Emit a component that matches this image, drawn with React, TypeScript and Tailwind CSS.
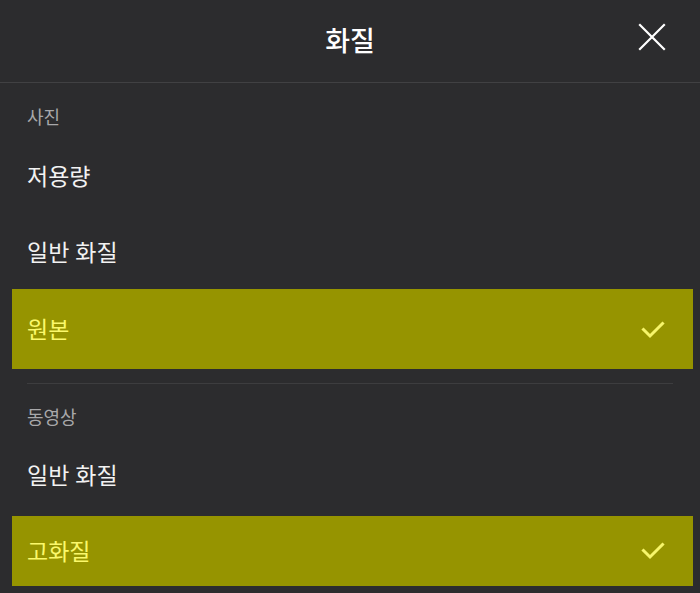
type Item = { label: string; selected?: boolean };

function Check() {
  return (
    <svg width="24" height="20" viewBox="0 0 24 20" fill="none">
      <path d="M2.5 9.5 L9 16 L21.5 3.5" stroke="#f7f56a" strokeWidth="3" strokeLinecap="square" />
    </svg>
  );
}

function CloseIcon() {
  return (
    <svg width="28" height="28" viewBox="0 0 28 28" fill="none">
      <path d="M2 2 L26 26 M26 2 L2 26" stroke="#ffffff" strokeWidth="2.2" strokeLinecap="square" />
    </svg>
  );
}

function Label({ text, className }: { text: string; className: string }) {
  return (
    <div className={`px-[27px] text-[18px] leading-[22px] text-[#a8a8aa] ${className}`}>{text}</div>
  );
}

function Option({ item, className = "" }: { item: Item; className?: string }) {
  if (item.selected) {
    return (
      <div
        className={`ml-3 mr-[7px] flex items-center justify-between bg-[#969400] pl-[15px] pr-[28px] text-[23px] text-[#fbf86b] ${className}`}
      >
        <span>{item.label}</span>
        <Check />
      </div>
    );
  }
  return (
    <div className={`flex h-[76px] items-center px-[27px] text-[23px] text-[#f2f2f2] ${className}`}>
      {item.label}
    </div>
  );
}

export default function App() {
  return (
    <div
      className="h-[593px] w-[700px] overflow-hidden bg-[#2c2c2e] text-white"
      style={{ fontFamily: '"Noto Sans", "Noto Sans CJK KR", sans-serif' }}
    >
      <header className="relative flex h-[83px] items-center justify-center border-b border-[#414143]">
        <h1 className="text-[27px] font-medium text-white">화질</h1>
        <button className="absolute right-[34px] top-[23px]">
          <CloseIcon />
        </button>
      </header>

      {/* 사진 */}
      <section>
        <Label text="사진" className="h-[55px] pt-[23px]" />
        <Option item={{ label: "저용량" }} />
        <Option item={{ label: "일반 화질" }} />
        <Option item={{ label: "원본", selected: true }} className="-mt-px h-[80px] pt-px" />
      </section>

      <div className="mx-[27px] mt-[14px] h-px bg-[#3d3d3f]" />

      {/* 동영상 */}
      <section>
        <Label text="동영상" className="h-[53px] pt-[22px]" />
        <Option item={{ label: "일반 화질" }} />
        <Option item={{ label: "고화질", selected: true }} className="mt-[3px] h-[70px]" />
      </section>
    </div>
  );
}
